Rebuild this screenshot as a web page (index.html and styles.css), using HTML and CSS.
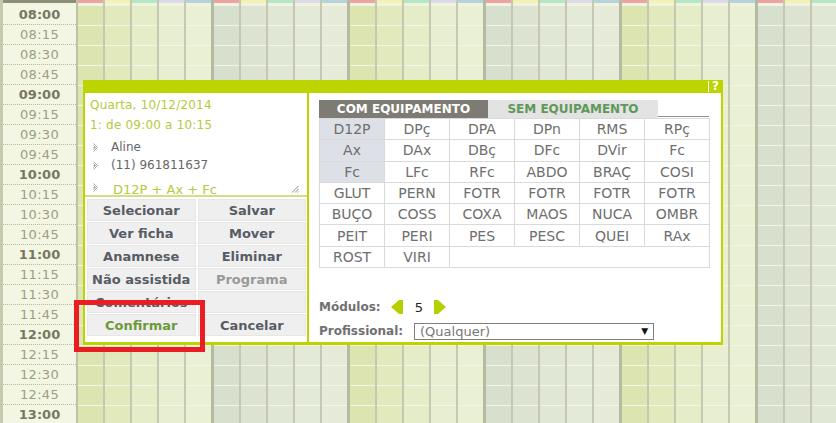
FILE: index.html
```html
<!DOCTYPE html>
<html lang="pt">
<head>
<meta charset="utf-8">
<title>Agenda</title>
<link rel="stylesheet" href="styles.css">
</head>
<body>
<div class="schedule">
  <div class="timecol">
    <div class="timehead"></div>
    <div class="slot hour">08:00</div>
    <div class="slot">08:15</div>
    <div class="slot">08:30</div>
    <div class="slot">08:45</div>
    <div class="slot hour">09:00</div>
    <div class="slot">09:15</div>
    <div class="slot">09:30</div>
    <div class="slot">09:45</div>
    <div class="slot hour">10:00</div>
    <div class="slot">10:15</div>
    <div class="slot">10:30</div>
    <div class="slot">10:45</div>
    <div class="slot hour">11:00</div>
    <div class="slot">11:15</div>
    <div class="slot">11:30</div>
    <div class="slot">11:45</div>
    <div class="slot hour">12:00</div>
    <div class="slot">12:15</div>
    <div class="slot">12:30</div>
    <div class="slot">12:45</div>
    <div class="slot hour">13:00</div>
  </div>
  <div class="days">
    <div class="group warm">
      <div class="day"><div class="tag pink"></div><div class="cells"></div></div>
      <div class="day"><div class="tag yellow"></div><div class="cells"></div></div>
      <div class="day"><div class="tag green"></div><div class="cells"></div></div>
      <div class="day"><div class="tag lav"></div><div class="cells"></div></div>
      <div class="day"><div class="tag blue"></div><div class="cells"></div></div>
    </div>
    <div class="group cool">
      <div class="day"><div class="tag pink"></div><div class="cells"></div></div>
      <div class="day"><div class="tag yellow"></div><div class="cells"></div></div>
      <div class="day"><div class="tag green"></div><div class="cells"></div></div>
      <div class="day"><div class="tag lav"></div><div class="cells"></div></div>
      <div class="day"><div class="tag blue"></div><div class="cells"></div></div>
    </div>
    <div class="group warm">
      <div class="day"><div class="tag pink"></div><div class="cells"></div></div>
      <div class="day"><div class="tag yellow"></div><div class="cells"></div></div>
      <div class="day"><div class="tag green"></div><div class="cells"></div></div>
      <div class="day"><div class="tag lav"></div><div class="cells"></div></div>
      <div class="day"><div class="tag blue"></div><div class="cells"></div></div>
    </div>
    <div class="group cool">
      <div class="day"><div class="tag pink"></div><div class="cells"></div></div>
      <div class="day"><div class="tag yellow"></div><div class="cells"></div></div>
      <div class="day"><div class="tag green"></div><div class="cells"></div></div>
      <div class="day"><div class="tag lav"></div><div class="cells"></div></div>
      <div class="day"><div class="tag blue"></div><div class="cells"></div></div>
    </div>
    <div class="group warm">
      <div class="day"><div class="tag pink"></div><div class="cells"></div></div>
      <div class="day"><div class="tag yellow"></div><div class="cells"></div></div>
      <div class="day"><div class="tag green"></div><div class="cells"></div></div>
      <div class="day"><div class="tag lav"></div><div class="cells"></div></div>
      <div class="day"><div class="tag blue"></div><div class="cells"></div></div>
    </div>
    <div class="group cool">
      <div class="day"><div class="tag pink"></div><div class="cells"></div></div>
      <div class="day"><div class="tag yellow"></div><div class="cells"></div></div>
      <div class="day"><div class="tag green"></div><div class="cells"></div></div>
      <div class="day"><div class="tag lav"></div><div class="cells"></div></div>
      <div class="day"><div class="tag blue"></div><div class="cells"></div></div>
    </div>
  </div>
</div>

<div class="dialog">
  <div class="titlebar"><span class="help">?</span></div>
  <div class="dbody">
    <div class="left">
      <div class="notes">
        <div class="date">Quarta, 10/12/2014</div>
        <div class="range">1: de 09:00 a 10:15</div>
        <div class="info first"><svg class="bullet" width="6" height="9" viewBox="0 0 6 9"><path d="M0.5 0.5 L4.5 4.5 L0.5 8.5 M0.5 2.5 L2.5 4.5 L0.5 6.5 M0.5 4.5 H3" fill="none" stroke="#a8a8a8" stroke-width="1"/></svg><span>Aline</span></div>
        <div class="info"><svg class="bullet" width="6" height="9" viewBox="0 0 6 9"><path d="M0.5 0.5 L4.5 4.5 L0.5 8.5 M0.5 2.5 L2.5 4.5 L0.5 6.5 M0.5 4.5 H3" fill="none" stroke="#a8a8a8" stroke-width="1"/></svg><span>(11) 961811637</span></div>
        <div class="info proc"><svg class="bullet" width="6" height="9" viewBox="0 0 6 9"><path d="M0.5 0.5 L4.5 4.5 L0.5 8.5 M0.5 2.5 L2.5 4.5 L0.5 6.5 M0.5 4.5 H3" fill="none" stroke="#a8a8a8" stroke-width="1"/></svg><span>D12P + Ax + Fc</span></div>
        <svg class="grip" width="8" height="8" viewBox="0 0 8 8"><path d="M7.5 1 L1 7.5 M7.5 4 L4 7.5 M7.5 6.5 L6.5 7.5" stroke="#888" stroke-width="1"/></svg>
      </div>
      <div class="actions">
        <div class="btn">Selecionar</div>
        <div class="btn">Salvar</div>
        <div class="btn">Ver ficha</div>
        <div class="btn">Mover</div>
        <div class="btn">Anamnese</div>
        <div class="btn">Eliminar</div>
        <div class="btn">Não assistida</div>
        <div class="btn disabled">Programa</div>
        <div class="btn">Comentários</div>
        <div class="btn"></div>
        <div class="btn confirm">Confirmar</div>
        <div class="btn">Cancelar</div>
      </div>
    </div>
    <div class="right">
      <div class="tabs">
        <div class="tab active">COM EQUIPAMENTO</div>
        <div class="tab">SEM EQUIPAMENTO</div>
      </div>
      <div class="codes">
        <span class="sel">D12P</span><span>DPç</span><span>DPA</span><span>DPn</span><span>RMS</span><span>RPç</span>
        <span class="sel">Ax</span><span>DAx</span><span>DBç</span><span>DFc</span><span>DVir</span><span>Fc</span>
        <span class="sel">Fc</span><span>LFc</span><span>RFc</span><span>ABDO</span><span>BRAÇ</span><span>COSI</span>
        <span>GLUT</span><span>PERN</span><span>FOTR</span><span>FOTR</span><span>FOTR</span><span>FOTR</span>
        <span>BUÇO</span><span>COSS</span><span>COXA</span><span>MAOS</span><span>NUCA</span><span>OMBR</span>
        <span>PEIT</span><span>PERI</span><span>PES</span><span>PESC</span><span>QUEI</span><span>RAx</span>
        <span>ROST</span><span>VIRI</span><span class="blank"></span>
      </div>
      <div class="mod">
        <span class="lbl">Módulos:</span>
        <svg class="arrow prev" width="13" height="14" viewBox="0 0 13 14"><polygon points="0,7 8,0 12,0 12,14 8,14" fill="#b5cf00"/></svg>
        <span class="num">5</span>
        <svg class="arrow next" width="13" height="14" viewBox="0 0 13 14"><polygon points="0,0 4,0 12,7 4,14 0,14" fill="#b5cf00"/></svg>
      </div>
      <div class="prof">
        <span class="lbl">Profissional:</span>
        <div class="select"><span>(Qualquer)</span><span class="caret">▼</span></div>
      </div>
    </div>
  </div>
</div>
<div class="highlight"></div>
</body>
</html>
```

FILE: styles.css
```css
* { box-sizing: border-box; }
html, body { margin: 0; padding: 0; }
body {
  width: 836px;
  height: 423px;
  overflow: hidden;
  position: relative;
  font-family: "DejaVu Sans", Verdana, sans-serif;
  background: #e6ebd8;
}

/* schedule */
.schedule {
  display: flex;
  height: 423px;
  overflow: hidden;
}
.timecol {
  flex: 0 0 78px;
  background: #f3f6e3;
  border-left: 3px solid #c6cab0;
  border-right: 2px solid #bdc1a6;
}
.timehead {
  height: 3px;
  margin-bottom: 2px;
  background: #8e8f78;
}
.slot {
  height: 20px;
  border-bottom: 1px dotted #b5b99f;
  font-size: 13px;
  line-height: 19px;
  text-align: center;
  color: #9d9d86;
  letter-spacing: 0.3px;
}
.slot.hour {
  font-weight: bold;
  color: #77775f;
  letter-spacing: 0;
}

.days {
  display: flex;
  gap: 3px;
  background: #b6baa1;
  flex: 1;
  overflow: hidden;
}
.group {
  display: flex;
  gap: 2px;
  background: #c6c9b1;
  flex: 0 0 133px;
}
.day {
  flex: 0 0 25px;
  display: flex;
  flex-direction: column;
  background: #eff3e0;
}
.tag { height: 3px; margin-bottom: 3px; }
.tag.pink { background: #eea3a3; }
.tag.yellow { background: #f2f2b2; }
.tag.green { background: #b4e8c4; }
.tag.lav { background: #dcd9e8; }
.tag.blue { background: #b4d2da; }

.cells {
  flex: 1;
  background-image: repeating-linear-gradient(to bottom, transparent 0 19px, #f3f6e6 19px 20px);
}
.warm .day:nth-child(1) .cells { background-color: #dce5b0; }
.warm .day:nth-child(2) .cells { background-color: #e1e9bd; }
.warm .day:nth-child(3) .cells { background-color: #e5edc8; }
.warm .day:nth-child(4) .cells { background-color: #e8efd0; }
.warm .day:nth-child(5) .cells { background-color: #e9f0d3; }
.cool .day:nth-child(1) .cells { background-color: #d7e0cc; }
.cool .day:nth-child(2) .cells { background-color: #dce4d1; }
.cool .day:nth-child(3) .cells { background-color: #e0e8d5; }
.cool .day:nth-child(4) .cells { background-color: #e4ead8; }
.cool .day:nth-child(5) .cells { background-color: #e5ebd8; }

/* dialog */
.dialog {
  position: absolute;
  left: 83px;
  top: 80px;
  width: 640px;
  height: 265px;
  display: flex;
  flex-direction: column;
}
.titlebar {
  height: 13px;
  background: #bcd400;
  display: flex;
  justify-content: flex-end;
  align-items: center;
  padding-right: 4px;
}
.help {
  color: #fff;
  font-weight: bold;
  font-size: 12px;
  line-height: 11px;
  border-left: 1px solid #fff;
  padding-left: 3px;
}
.dbody {
  flex: 1;
  display: flex;
  background: #fff;
  border: 2px solid #bcd400;
  border-top: 0;
  border-bottom-width: 3px;
}
.left {
  flex: 0 0 224px;
  border-right: 2px solid #bcd400;
  display: flex;
  flex-direction: column;
}
.notes {
  height: 104px;
  position: relative;
  padding: 2px 0 0 5px;
  border-bottom: 2px solid #d2df84;
  font-size: 12px;
}
.date, .range { color: #b5ca3c; }
.date { height: 20px; line-height: 20px; letter-spacing: 0.2px; }
.range { height: 21px; line-height: 21px; letter-spacing: 0.2px; }
.info {
  display: flex;
  align-items: center;
  height: 18px;
  color: #666;
}
.info.first { margin-top: 2px; }
.bullet { margin: 0 12px 0 3px; flex: 0 0 auto; }
.proc {
  margin-top: 6px;
  color: #b5ca3c;
  font-size: 13px;
}
.proc .bullet { margin-right: 14px; margin-top: -4px; }
.grip { position: absolute; right: 8px; bottom: 2px; }

.actions {
  margin-top: 2px;
  display: grid;
  grid-template-columns: 1fr 1fr;
  grid-auto-rows: 22px;
  column-gap: 2px;
  row-gap: 1px;
  padding: 0 1px 0 2px;
}
.btn {
  background: #efefef;
  border: 1px solid #e6e6e6;
  display: flex;
  align-items: center;
  justify-content: center;
  font-size: 13px;
  font-weight: bold;
  color: #575c65;
  white-space: nowrap;
}
.btn.disabled { color: #999; }
.btn.confirm { color: #6c9a3a; }

.right {
  flex: 1;
  display: flex;
  flex-direction: column;
  padding: 7px 12px 2px 10px;
}
.tabs {
  display: flex;
  height: 18px;
  background: linear-gradient(to top, #fff 0 1px, #8f8f8f 1px 2px, transparent 2px);
  width: 390px;
}
.tab {
  height: 18px;
  display: flex;
  align-items: center;
  justify-content: center;
  font-size: 12px;
  font-weight: bold;
  background: #e3e3e3;
  color: #5f9858;
  width: 170px;
}
.tab.active {
  background: #7d7b73;
  color: #fff;
  width: 169px;
}
.codes {
  display: grid;
  grid-template-columns: repeat(6, 64px);
  grid-auto-rows: 20.3px;
  gap: 1px;
  background: #dadada;
  border: 1px solid #dadada;
  width: max-content;
}
.codes span {
  background: #fff;
  display: flex;
  align-items: center;
  justify-content: center;
  font-size: 14px;
  color: #6e6e6e;
}
.codes span.sel { background: #dde1e7; }
.codes span.blank { grid-column: span 4; }

.mod {
  margin-top: auto;
  display: flex;
  align-items: center;
  height: 16px;
  margin-bottom: 7px;
}
.lbl {
  font-size: 12px;
  font-weight: bold;
  color: #707070;
}
.arrow.prev { margin-left: 10px; }
.num {
  font-size: 13px;
  color: #222;
  margin: 0 11px 0 11px;
}
.prof {
  display: flex;
  align-items: center;
  height: 18px;
}
.select {
  margin-left: 11px;
  width: 240px;
  height: 17px;
  border: 1px solid #7f7f7f;
  display: flex;
  align-items: center;
  justify-content: space-between;
  padding: 0 5px 0 5px;
  font-size: 13px;
  color: #777;
}
.caret { font-size: 9px; color: #111; }

.highlight {
  position: absolute;
  left: 74px;
  top: 300px;
  width: 131px;
  height: 52px;
  border: 5px solid #ea1c24;
}
```
